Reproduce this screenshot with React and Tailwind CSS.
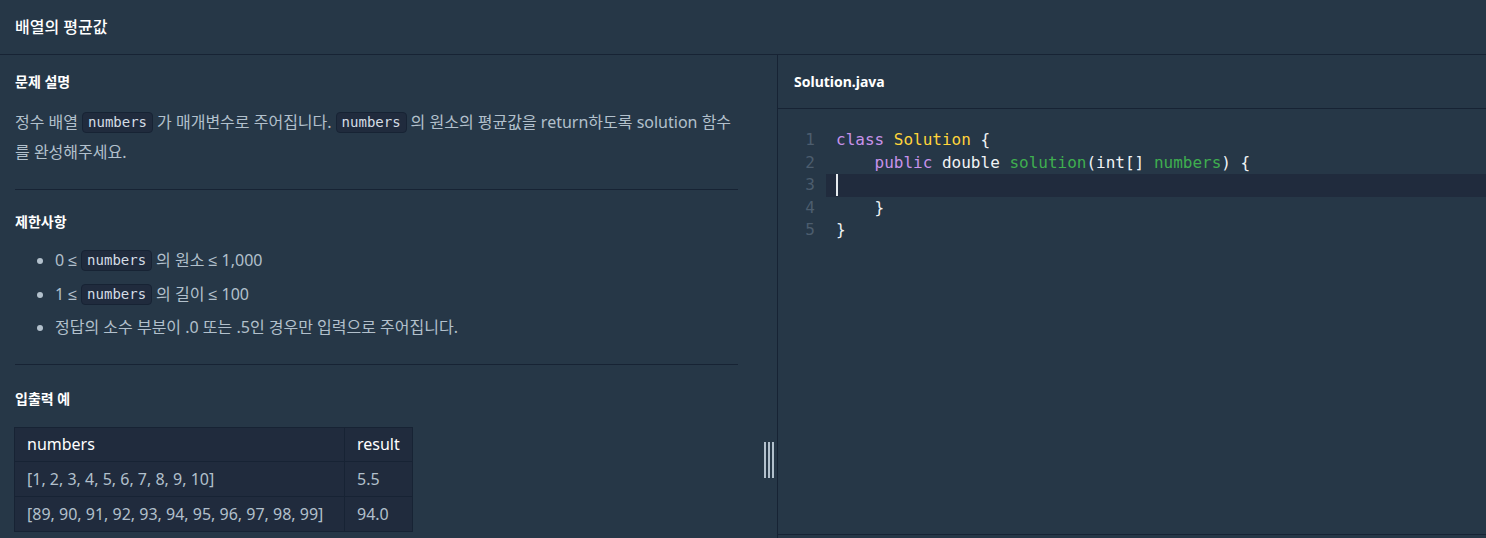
const Code = ({ children }) => (
  <code className="mx-[4px] inline-block rounded-[4px] border border-[#172334] bg-[#202b3d] px-[5px] align-[1px] font-['DejaVu_Sans_Mono',monospace] text-[14px] leading-[19px] text-[#d5dde5]">
    {children}
  </code>
);

const Le = () => <span className="font-['Liberation_Sans',sans-serif]">≤</span>;

const SectionTitle = ({ children }) => (
  <h5 className="text-[14px] font-bold leading-[20px] text-white">{children}</h5>
);

const lines = [
  [['class', 'text-[#c792ea]'], [' '], ['Solution', 'text-[#ffd43b]'], [' {']],
  [['    '], ['public', 'text-[#c792ea]'], [' double '], ['solution', 'text-[#3fae4f]'], ['(int[] '], ['numbers', 'text-[#3fae4f]'], [') {']],
  [],
  [['    }']],
  [['}']],
];

export default function App() {
  return (
    <div className="flex h-[538px] w-full flex-col overflow-hidden bg-[#263747] font-['Noto_Sans','Noto_Sans_CJK_KR',sans-serif] text-[#b2c0cc]">
      {/* Title bar */}
      <div className="flex h-[55px] shrink-0 items-center border-b border-[#172334] px-[15px]">
        <span className="text-[16px] font-medium text-white">배열의 평균값</span>
      </div>

      <div className="flex min-h-0 flex-1">
        {/* Description */}
        <div className="relative w-[778px] shrink-0 border-r border-[#172334]">
          <div className="ml-[15px] w-[723px] pt-[17px]">
            <SectionTitle>문제 설명</SectionTitle>
            <p className="mt-[15px] pb-[22px] text-[16px] leading-[30px]">
              정수 배열<Code>numbers</Code>가 매개변수로 주어집니다.<Code>numbers</Code>의 원소의 평균값을 return하도록 solution 함수를 완성해주세요.
            </p>
            <hr className="border-[#172334]" />

            <div className="pt-[22px]">
              <SectionTitle>제한사항</SectionTitle>
              <ul className="mt-[12px] list-disc pb-[19px] pl-[40px] text-[16px] leading-[33.5px] marker:text-[#b2c0cc]">
                <li>0 <Le /><Code>numbers</Code>의 원소 <Le /> 1,000</li>
                <li>1 <Le /><Code>numbers</Code>의 길이 <Le /> 100</li>
                <li>정답의 소수 부분이 .0 또는 .5인 경우만 입력으로 주어집니다.</li>
              </ul>
            </div>
            <hr className="border-[#172334]" />

            <div className="pt-[24px]">
              <SectionTitle>입출력 예</SectionTitle>
              <table className="-ml-px mt-[18px] border-collapse bg-[#202b3d] text-[16px]">
                <thead>
                  <tr className="h-[34px]">
                    <th className="w-[330px] border border-[#172334] px-[12px] text-left font-normal text-white">numbers</th>
                    <th className="border border-[#172334] px-[12px] text-left font-normal text-white">result</th>
                  </tr>
                </thead>
                <tbody>
                  <tr className="h-[35px]">
                    <td className="border border-[#172334] px-[12px]">[1, 2, 3, 4, 5, 6, 7, 8, 9, 10]</td>
                    <td className="border border-[#172334] px-[12px]">5.5</td>
                  </tr>
                  <tr className="h-[35px]">
                    <td className="border border-[#172334] px-[12px]">[89, 90, 91, 92, 93, 94, 95, 96, 97, 98, 99]</td>
                    <td className="border border-[#172334] px-[12px]">94.0</td>
                  </tr>
                </tbody>
              </table>
            </div>
          </div>

          {/* Resize handle */}
          <div className="absolute left-[764px] top-[387px] flex h-[36px] gap-[2px]">
            <span className="w-[2px] bg-[#b2c0cc]" />
            <span className="w-[2px] bg-[#b2c0cc]" />
            <span className="w-[2px] bg-[#b2c0cc]" />
          </div>
        </div>

        {/* Editor */}
        <div className="flex min-w-0 flex-1 flex-col">
          <div className="flex h-[54px] shrink-0 items-center border-b border-[#172334] px-[16px]">
            <span className="text-[14px] font-bold text-white">Solution.java</span>
          </div>
          <div className="flex-1 border-b border-[#172334] pt-[20px] font-['DejaVu_Sans_Mono',monospace] text-[16px] leading-[22.5px]">
            {lines.map((line, i) => (
              <div key={i} className={`flex ${i === 2 ? 'bg-[#202b3d]' : ''}`}>
                <span className="w-[48px] shrink-0 bg-[#263747] pr-[11px] text-right text-[#4c5d6e]">{i + 1}</span>
                <span className="whitespace-pre pl-[10px] text-[#f0f3f5]">
                  {i === 2 && <span className="inline-block h-[22px] w-[1.5px] translate-y-[-1px] bg-[#e6ebef] align-middle" />}
                  {line.map(([text, cls], j) => (
                    <span key={j} className={cls}>{text}</span>
                  ))}
                </span>
              </div>
            ))}
          </div>
          <div className="h-[3px] shrink-0" />
        </div>
      </div>
    </div>
  );
}
